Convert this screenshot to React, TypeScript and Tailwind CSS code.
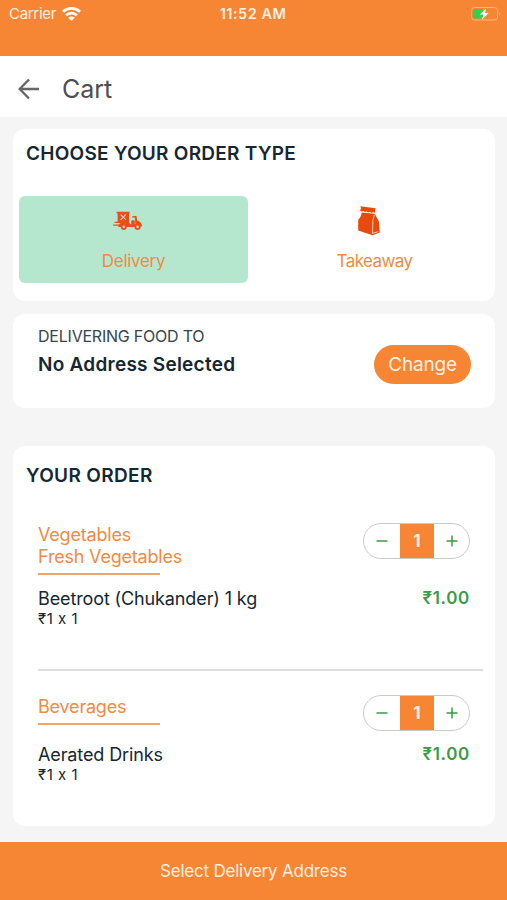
import { useState } from 'react';

interface CartItem {
  id: string;
  categories: string[];
  name: string;
  price: number;
  qty: number;
}

const initialItems: CartItem[] = [
  { id: 'beetroot', categories: ['Vegetables', 'Fresh Vegetables'], name: 'Beetroot (Chukander) 1 kg', price: 1, qty: 1 },
  { id: 'drinks', categories: ['Beverages'], name: 'Aerated Drinks', price: 1, qty: 1 },
];

function WifiIcon() {
  return (
    <svg width="19" height="15" viewBox="0 0 19 15" fill="none" stroke="#fff" strokeWidth="2.7">
      <path d="M1 4.8C5.7 .3 13.3 .3 18 4.8" />
      <path d="M4.1 8.2C7.1 5.3 11.9 5.3 14.9 8.2" />
      <path d="M9.5 14L6.2 10.6C8 9 11 9 12.8 10.6Z" fill="#fff" stroke="none" />
    </svg>
  );
}

function BatteryIcon() {
  return (
    <svg width="31" height="16" viewBox="0 0 31 16" fill="none">
      <rect x="1.5" y="1.5" width="26" height="12.5" rx="3" stroke="#fbb582" />
      <path d="M29 6V10C30.3 9.6 30.3 6.4 29 6Z" fill="#fbb582" />
      <rect x="3" y="3" width="10.5" height="9.5" rx="1.5" fill="#35cf4b" />
      <path d="M16 2.5L9.8 8.6H13.3L12 13.5L18.6 7H15Z" fill="#fff" />
    </svg>
  );
}

function ScooterIcon() {
  return (
    <svg width="30" height="20" viewBox="0 0 30 20" fill="none">
      <path d="M3.6 .8H16.6V2.2H16V12H4.6V2.2H3.6Z" fill="#e94e1b" />
      <path d="M7.6 3.6L12.8 8.6M12.8 3.4L7.6 8.8" stroke="#f3c9ae" strokeWidth="1.2" />
      <path d="M1.5 11.4H7M.2 14.2H6" stroke="#e94e1b" strokeWidth="1.2" />
      <path d="M5.2 15.5C5.5 12.6 8 11 11 11.2H16.2C16.6 12.6 17.2 13.4 18.2 13.4V10.6C18.2 9.7 18.9 9.2 19.8 9.2H20.6C21.4 9.2 21.8 9.9 21.8 10.6V13.2H22.4L21.8 6.4H19.4V4.9H23.5L24.2 9.5C27 10.3 28.8 12.2 29 15.2L26 16H5.2Z" fill="#e94e1b" />
      <circle cx="10.8" cy="15.8" r="3.1" fill="#e94e1b" />
      <circle cx="24.6" cy="15.8" r="3.1" fill="#e94e1b" />
      <circle cx="10.8" cy="15.8" r="1.4" fill="#f3c9ae" />
      <circle cx="24.6" cy="15.8" r="1.4" fill="#f3c9ae" />
    </svg>
  );
}

function BagIcon() {
  return (
    <svg width="24" height="32" viewBox="0 0 24 32" fill="none">
      <path d="M3.4 1.2L18.4 3.2L17.7 8L16 7.1L14.5 7.9L12.8 6.8L11.2 7.5L9.5 6.4L8 7L6.4 5.9L4.8 6.4L3 5.4L4 3.5Z" fill="#e94a0c" />
      <path d="M4.6 7.4L17.8 8.8L21.8 16.2L22.8 27.4L15.6 30.2L1.2 25.4V14.8C3.2 12.6 4.4 10.6 4.6 7.4Z" fill="#e94a0c" />
      <path d="M17.4 9.5L15.8 15.6L15.5 28.4L21.2 26.6" stroke="#fbd9c8" strokeWidth=".9" />
    </svg>
  );
}

function QtyStepper({ qty, onChange }: { qty: number; onChange: (qty: number) => void }) {
  return (
    <div className="-mt-px flex h-9 w-[107px] overflow-hidden rounded-full border border-[#c9cbcb]">
      <button aria-label="Decrease" onClick={() => onChange(Math.max(1, qty - 1))} className="flex w-9 items-center justify-center">
        <svg width="12" height="12" viewBox="0 0 12 12" stroke="#3c9a45" strokeWidth="1.5">
          <path d="M.5 6H11.5" />
        </svg>
      </button>
      <span className="flex w-[34px] items-center justify-center bg-[#f68634] pt-px text-[17px] font-bold text-[#fff0e2]">{qty}</span>
      <button aria-label="Increase" onClick={() => onChange(qty + 1)} className="flex flex-1 items-center justify-center">
        <svg width="12" height="12" viewBox="0 0 12 12" stroke="#3c9a45" strokeWidth="1.5">
          <path d="M.5 6H11.5M6 .5V11.5" />
        </svg>
      </button>
    </div>
  );
}

export default function App() {
  const [orderType, setOrderType] = useState('Delivery');
  const [items, setItems] = useState(initialItems);

  const setQty = (id: string, qty: number) => {
    setItems(prev => prev.map(item => (item.id === id ? { ...item, qty } : item)));
  };

  return (
    <div className="flex h-[900px] w-[507px] flex-col overflow-hidden bg-[#f5f5f5] font-['Inter',sans-serif] text-[#152732] [font-feature-settings:'calt'_0]">
      {/* Status bar */}
      <div className="h-14 shrink-0 bg-[#f68634] text-[15px] text-white">
        <div className="grid h-7 grid-cols-3 items-center pr-1.5 pl-[9px]">
          <div className="flex items-center gap-1.5">
            <span className="tracking-[-0.3px] text-[#fff0e2]">Carrier</span>
            <WifiIcon />
          </div>
          <span className="pr-1 text-center text-[14.5px] font-semibold tracking-[0.5px] whitespace-nowrap text-[#fff0e2]">11:52 AM</span>
          <div className="flex justify-end">
            <BatteryIcon />
          </div>
        </div>
      </div>

      {/* Header */}
      <header className="flex h-[61px] shrink-0 items-center gap-[22px] bg-white pt-1 pl-[18px]">
        <svg width="22" height="22" viewBox="0 0 22 22" fill="none" stroke="#666" strokeWidth="2.3">
          <path d="M21 11H2M11 1.5L1.7 11L11 20.5" />
        </svg>
        <h1 className="pt-0.5 text-[25px] text-[#4e4e4e]">Cart</h1>
      </header>

      <main className="flex flex-1 flex-col pt-[12px] pr-3 pl-[13px]">
        <section className="h-[172px] rounded-xl bg-white px-1.5 pt-[13px]">
          <h2 className="pl-[7px] text-[19px] leading-6 font-semibold tracking-[0.27px]">CHOOSE YOUR ORDER TYPE</h2>
          <div className="mt-[30px] flex gap-3">
            {['Delivery', 'Takeaway'].map(type => (
              <button
                key={type}
                onClick={() => setOrderType(type)}
                className={`flex h-[87px] w-[229px] flex-col items-center rounded-md ${orderType === type ? 'bg-[#b5e7cf]' : ''}`}
              >
                <span className="flex h-[49px] w-full items-center justify-center pr-[11px]">
                  {type === 'Delivery' ? <ScooterIcon /> : <BagIcon />}
                </span>
                <span className={`text-[17px] leading-[32px] text-[#f08b42] ${type === 'Delivery' ? 'tracking-[-0.3px]' : 'tracking-[-0.6px]'}`}>{type}</span>
              </button>
            ))}
          </div>
        </section>

        <section className="mt-[13px] flex h-[94px] justify-between rounded-xl bg-white pr-6 pl-[25px]">
          <div className="pt-[11px]">
            <p className="text-base leading-[22px] tracking-[-0.22px] text-[#36444d]">DELIVERING FOOD TO</p>
            <p className="mt-1.5 text-[19px] leading-6 font-semibold tracking-[0.25px]">No Address Selected</p>
          </div>
          <button className="mt-[31px] h-[39px] w-[97px] rounded-full bg-[#f68634] pt-px text-[19px] tracking-[-0.2px] text-[#fff0e2]">Change</button>
        </section>

        <section className="mt-[38px] h-[380px] rounded-xl bg-white pt-[18px]">
          <h2 className="pl-[13px] text-[19px] leading-6 font-semibold tracking-[0.35px]">YOUR ORDER</h2>
          <div className="mt-9 flex flex-col divide-y-2 divide-[#dcdede] pr-3 pl-[25px]">
            {items.map(item => (
              <div key={item.id} className="pb-10 not-first:pt-[25px]">
                <div className="flex items-start justify-between pr-[13px]">
                  <div className="text-lg leading-[22px] tracking-[-0.2px] text-[#f08b42]">
                    {item.categories.map(category => (
                      <p key={category}>{category}</p>
                    ))}
                    <div className="mt-[5px] h-0.5 w-[122px] bg-[#f0a46a]" />
                  </div>
                  <QtyStepper qty={item.qty} onChange={qty => setQty(item.id, qty)} />
                </div>
                <div className="mt-3 flex items-start justify-between pr-[13px]">
                  <div>
                    <p className="pt-px text-lg leading-[22px] tracking-[-0.12px]">{item.name}</p>
                    <p className="-mt-px text-[15px] leading-5 tracking-[0.5px]">₹{item.price} x {item.qty}</p>
                  </div>
                  <span className="text-[17px] leading-[22px] font-semibold tracking-[0.7px] text-[#3c9a45]">₹{(item.price * item.qty).toFixed(2)}</span>
                </div>
              </div>
            ))}
          </div>
        </section>
      </main>

      <button className="h-[58px] shrink-0 bg-[#f68634] pt-0.5 text-[17px] tracking-[-0.22px] text-[#fff0e2]">Select Delivery Address</button>
    </div>
  );
}
